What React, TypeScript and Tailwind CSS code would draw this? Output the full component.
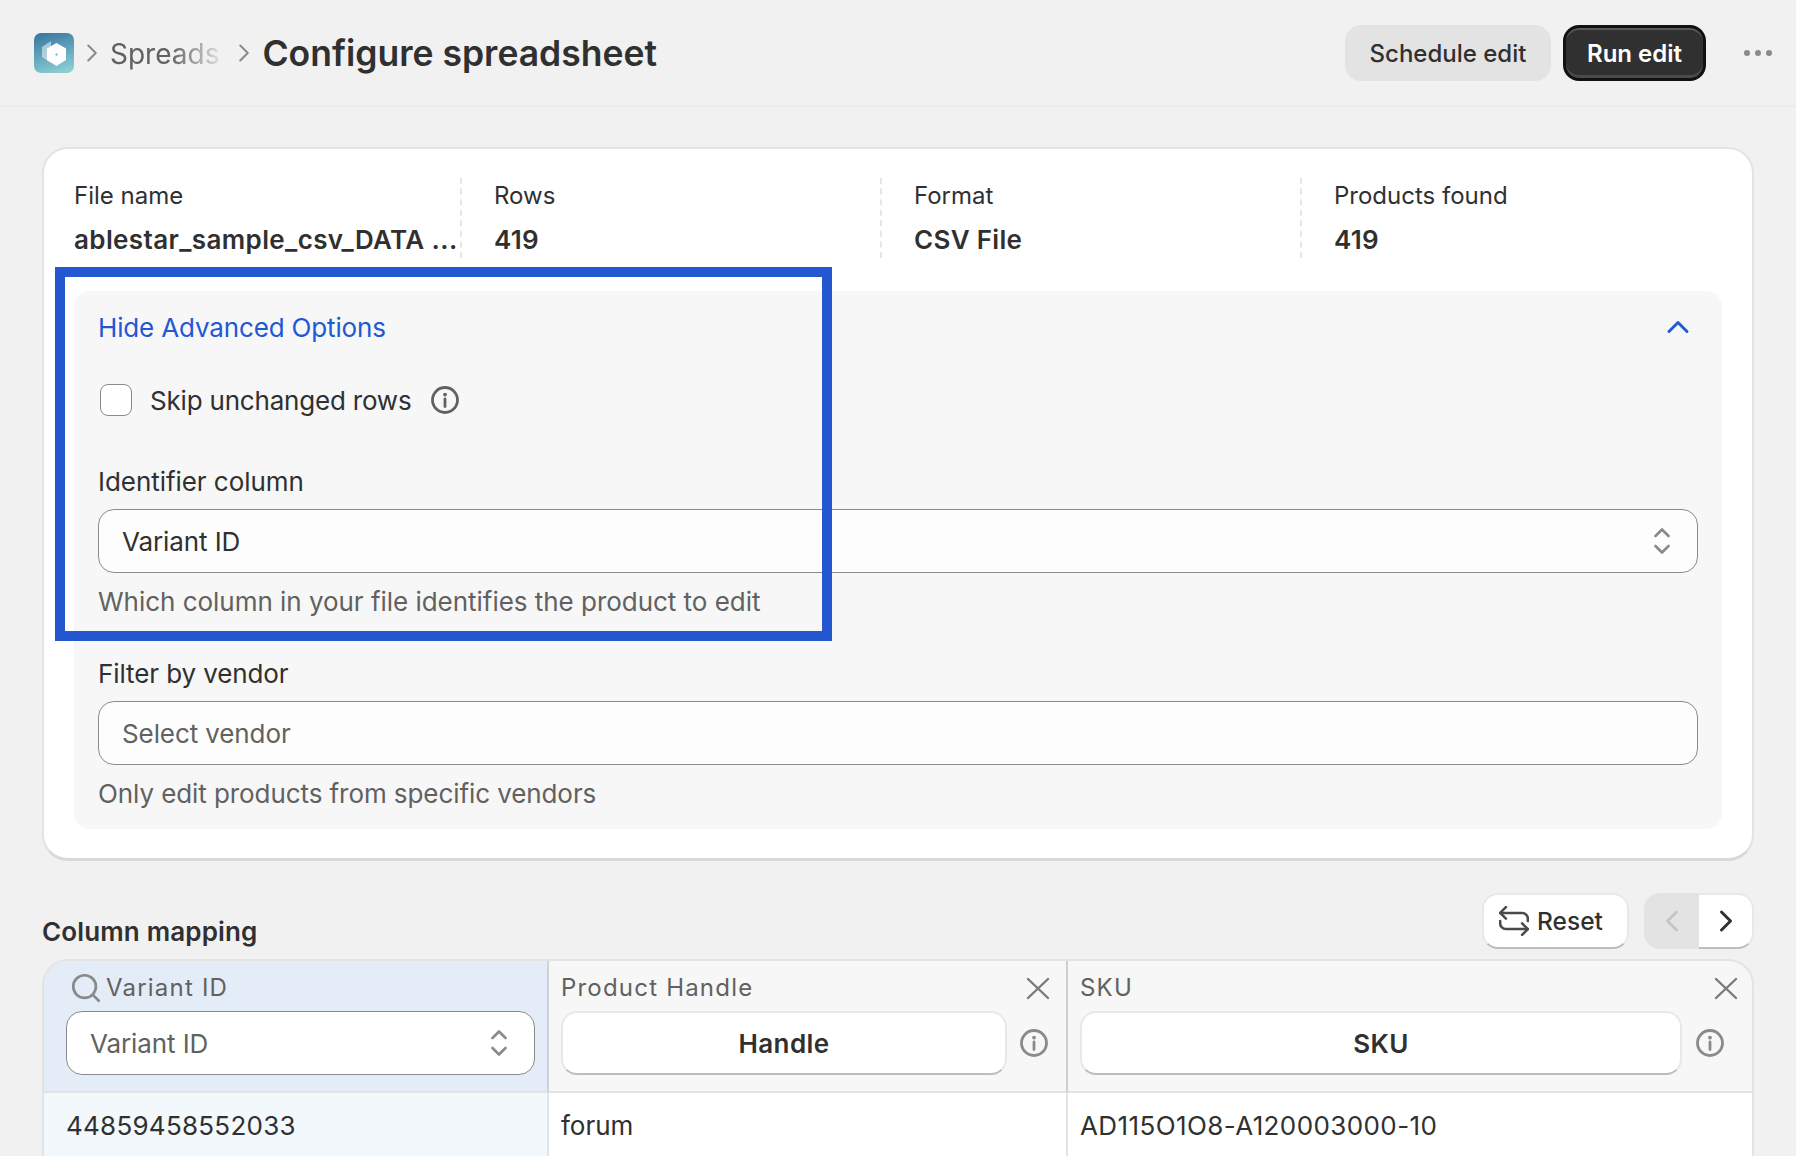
import React from "react";
import { ChevronLeft, ChevronRight, ChevronUp, Search } from "lucide-react";

const font = "font-['Inter',sans-serif]";

const InfoIcon = ({ className }: { className: string }) => (
  <svg viewBox="0 0 28 28" fill="none" className={className}>
    <circle cx="14" cy="14" r="12.500" stroke="currentColor" strokeWidth="2.800" />
    <circle cx="14" cy="8.600" r="1.900" fill="currentColor" />
    <path d="M14 13v7.500" stroke="currentColor" strokeWidth="2.800" strokeLinecap="round" />
  </svg>
);

const UpDown = () => (
  <svg viewBox="0 0 16 26" fill="none" stroke="#8a8a8a" strokeWidth="2.600" strokeLinecap="round" strokeLinejoin="round" className="w-4 h-[26px]">
    <path d="M1.500 8 8 1.500 14.500 8" />
    <path d="M1.500 18 8 24.500 14.500 18" />
  </svg>
);

const CloseIcon = () => (
  <svg viewBox="0 0 24 24" fill="none" stroke="#7a7a7a" strokeWidth="2.400" strokeLinecap="round" className="w-6 h-6">
    <path d="M2 3l20 19M22 3 2 22" />
  </svg>
);

const Logo = () => (
  <svg viewBox="0 0 40 40" className="w-10 h-10 shrink-0">
    <defs>
      <linearGradient id="logoBg" x1="0.3" y1="0" x2="0.6" y2="1">
        <stop offset="0" stopColor="#3a7ba2" />
        <stop offset="1" stopColor="#8bcdd3" />
      </linearGradient>
    </defs>
    <rect width="40" height="40" rx="7" fill="url(#logoBg)" />
    <path d="M17 8 8 14v10l9 6z" fill="#ffffff" opacity="0.5" />
    <path d="M22.500 10l9.500 5.500V27l-9.500 6-9.500-6V15.500z" fill="#ffffff" />
    <path d="M22.500 20v3M21 21.500h3" stroke="#8bcdd3" strokeWidth="1" />
  </svg>
);

const Stat = ({ label, value, first }: { label: string; value: string; first?: boolean }) => (
  <div
    className={
      first
        ? "w-[386px] h-20 shrink-0 flex flex-col"
        : "w-[420px] h-20 shrink-0 flex flex-col pl-[32px] border-l-2 border-dashed border-[#e6e6e6]"
    }
  >
    <span className="mt-[3px] text-[24px] leading-[30px] text-[#303030]">{label}</span>
    <span
      className={`mt-[14px] text-[26px] leading-[30px] font-semibold text-[#303030] whitespace-nowrap ${
        first ? "tracking-[0.38px]" : "tracking-[0.3px]"
      }`}
    >
      {value}
    </span>
  </div>
);

const FieldShell = ({ children }: { children: React.ReactNode }) => (
  <div className="h-16 flex items-center justify-between pl-[23px] pr-[27px] bg-[#fdfdfd] border border-[#8a8a8a] rounded-2xl">
    {children}
  </div>
);

const MapButton = ({ label, className }: { label: string; className: string }) => (
  <div
    className={`h-16 shrink-0 flex items-center justify-center bg-white rounded-2xl border-2 border-[#e8e8e8] border-b-[#bdbdbd] text-[26px] font-semibold text-[#303030] tracking-[0.4px] ${className}`}
  >
    {label}
  </div>
);

export default function App() {
  return (
    <div className={`relative h-[1156px] overflow-hidden bg-[#f1f1f1] ${font}`}>
      {/* top bar */}
      <header className="h-[107px] flex items-center pl-[34px] pr-6 border-b-2 border-[#ebebeb]">
        <Logo />
        <ChevronRight size={30} strokeWidth={1.6} className="ml-[3px] text-[#8a8a8a]" />
        <span className="ml-[3px] pt-[2px] whitespace-nowrap text-[28px] text-[#616161] [mask-image:linear-gradient(to_right,black_55%,rgba(0,0,0,0.15)_100%)]">
          Spreads
        </span>
        <ChevronRight size={30} strokeWidth={1.6} className="ml-[10px] text-[#8a8a8a]" />
        <h1 className="ml-[3px] pt-[2px] text-[35.500px] font-semibold text-[#303030]">Configure spreadsheet</h1>
        <div className="ml-auto flex items-center">
          <div className="w-[206px] h-14 pt-[3px] flex items-center justify-center rounded-2xl bg-[#e3e3e3] text-[24px] font-medium text-[#303030]">
            Schedule edit
          </div>
          <div className="ml-3 w-[143px] h-14 pt-[2px] flex items-center justify-center rounded-2xl bg-[#303030] border-[3px] border-[#111111] shadow-[inset_0_2px_0_#5a5a5a,inset_0_-3px_0_#4a4a4a] text-[24px] font-semibold text-white">
            Run edit
          </div>
          <div className="ml-[38px] flex gap-[5px]">
            <span className="w-[6px] h-[6px] rounded-full bg-[#8a8a8a]" />
            <span className="w-[6px] h-[6px] rounded-full bg-[#8a8a8a]" />
            <span className="w-[6px] h-[6px] rounded-full bg-[#8a8a8a]" />
          </div>
        </div>
      </header>

      <main className="pt-[40px] px-[42px]">
        {/* summary card */}
        <section className="h-[714px] bg-white rounded-[26px] border-2 border-[#e3e3e3] border-b-[3px] border-b-[#d8d8d8] px-[30px] pt-[29px]">
          <div className="flex">
            <Stat first label="File name" value="ablestar_sample_csv_DATA ..." />
            <Stat label="Rows" value="419" />
            <Stat label="Format" value="CSV File" />
            <Stat label="Products found" value="419" />
          </div>

          <div className="mt-[33px] h-[538px] rounded-2xl bg-[#f7f7f7] px-6 pt-[20px]">
            <div className="flex items-center justify-between h-8">
              <span className="text-[26px] text-[#2258d3] tracking-[-0.15px]">Hide Advanced Options</span>
              <ChevronUp size={36} strokeWidth={2} className="text-[#1f5bd6] mr-[2px] -mt-[1px]" />
            </div>

            <div className="mt-[41px] flex items-center h-8 pl-[2px]">
              <span className="w-8 h-8 rounded-lg bg-white border border-[#8a8a8a]" />
              <span className="ml-[18px] text-[26px] text-[#303030] tracking-[-0.2px]">Skip unchanged rows</span>
              <InfoIcon className="ml-5 w-7 h-7 text-[#616161]" />
            </div>

            <div className="mt-[50px] text-[26px] leading-8 text-[#303030] tracking-[-0.05px]">Identifier column</div>
            <div className="mt-[11px]">
              <FieldShell>
                <span className="text-[26px] text-[#303030] tracking-[-0.1px]">Variant ID</span>
                <UpDown />
              </FieldShell>
            </div>
            <div className="mt-[13px] text-[26px] leading-8 text-[#616161] tracking-[-0.03px]">
              Which column in your file identifies the product to edit
            </div>

            <div className="mt-[40px] text-[26px] leading-8 text-[#303030] tracking-[-0.1px]">Filter by vendor</div>
            <div className="mt-[11px]">
              <FieldShell>
                <span className="text-[26px] text-[#616161] tracking-[-0.1px]">Select vendor</span>
              </FieldShell>
            </div>
            <div className="mt-[13px] text-[26px] leading-8 text-[#616161] tracking-[-0.08px]">
              Only edit products from specific vendors
            </div>
          </div>
        </section>

        {/* column mapping */}
        <div className="mt-[32px] h-[66px] flex items-start">
          <h2 className="mt-[23px] text-[26px] leading-8 font-semibold text-[#303030] tracking-[0.15px]">Column mapping</h2>
          <div className="ml-auto flex items-start">
            <div className="w-[147px] h-14 pl-[15px] flex items-center gap-[8px] rounded-2xl bg-white border-2 border-[#e8e8e8] border-b-[#bdbdbd] text-[24.500px] font-medium text-[#303030]">
              <svg viewBox="2 2 26 26" fill="none" stroke="#4a4a4a" strokeWidth="2.200" strokeLinecap="round" strokeLinejoin="round" className="w-[30px] h-[30px]">
                <path d="M8 3 3 8l5 5" />
                <path d="M3 8h19a5 5 0 0 1 5 5v2" />
                <path d="M22 27l5-5-5-5" />
                <path d="M27 22H8a5 5 0 0 1-5-5v-2" />
              </svg>
              Reset
            </div>
            <div className="ml-[15px] w-[110px] h-14 flex">
              <div className="w-[55px] flex items-center justify-center rounded-l-2xl bg-[#e3e3e3] text-[#c4c4c4]">
                <ChevronLeft size={36} strokeWidth={1.800} />
              </div>
              <div className="flex-1 flex items-center justify-center rounded-r-2xl bg-white border-2 border-l-0 border-[#e8e8e8] border-b-[#bdbdbd] text-[#303030]">
                <ChevronRight size={36} strokeWidth={2} />
              </div>
            </div>
          </div>
        </div>

        <div className="h-[300px] grid grid-cols-[505px_519px_1fr] content-start rounded-t-[26px] overflow-hidden border-2 border-[#e3e3e3]">
          <div className="h-[132px] bg-[#e4ecf7] border-b-2 border-b-[#e3e3e3] border-r-2 border-r-[#cfd3d9] pl-[22px] pr-[12px]">
            <div className="h-[50px] pt-[4px] flex items-center gap-[3px] pl-[3px]">
              <Search size={34} strokeWidth={1.900} className="text-[#8a8a8a]" />
              <span className="text-[24px] text-[#616161] tracking-[1.200px]">Variant ID</span>
            </div>
            <div className="h-16 flex items-center justify-between pl-[23px] pr-[27px] bg-white border border-[#8a8a8a] rounded-2xl">
              <span className="text-[26px] text-[#616161] tracking-[-0.1px]">Variant ID</span>
              <UpDown />
            </div>
          </div>
          <div className="h-[132px] bg-[#f7f7f7] border-b-2 border-b-[#e3e3e3] border-r-2 border-r-[#cfcfcf] pl-3 pr-[16px]">
            <div className="h-[50px] pt-[4px] flex items-center justify-between">
              <span className="text-[24px] text-[#616161] tracking-[1.200px]">Product Handle</span>
              <CloseIcon />
            </div>
            <div className="flex items-center">
              <MapButton label="Handle" className="w-[446px]" />
              <InfoIcon className="ml-[13px] w-7 h-7 text-[#8a8a8a]" />
            </div>
          </div>
          <div className="h-[132px] bg-[#f7f7f7] border-b-2 border-b-[#e3e3e3] pl-3 pr-[14px]">
            <div className="h-[50px] pt-[4px] flex items-center justify-between">
              <span className="text-[24px] text-[#616161] tracking-[1.200px]">SKU</span>
              <CloseIcon />
            </div>
            <div className="flex items-center">
              <MapButton label="SKU" className="w-[602px]" />
              <InfoIcon className="ml-[14px] w-7 h-7 text-[#8a8a8a]" />
            </div>
          </div>

          <div className="h-[168px] bg-[#f3f8fc] border-r-2 border-r-[#e3e3e3] pl-[22px] pt-[13px] text-[26px] text-[#303030] tracking-[0.25px]">
            44859458552033
          </div>
          <div className="h-[168px] bg-white border-r-2 border-r-[#e3e3e3] pl-3 pt-[13px] text-[26px] text-[#303030]">
            forum
          </div>
          <div className="h-[168px] bg-white pl-3 pt-[13px] text-[26px] text-[#303030] tracking-[0.4px]">
            AD115O1O8-A120003000-10
          </div>
        </div>
      </main>

      {/* blue annotation frame drawn over the screenshot */}
      <div className="absolute left-[55px] top-[267px] w-[777px] h-[374px] border-[10px] border-[#2557d0] pointer-events-none" />
    </div>
  );
}
